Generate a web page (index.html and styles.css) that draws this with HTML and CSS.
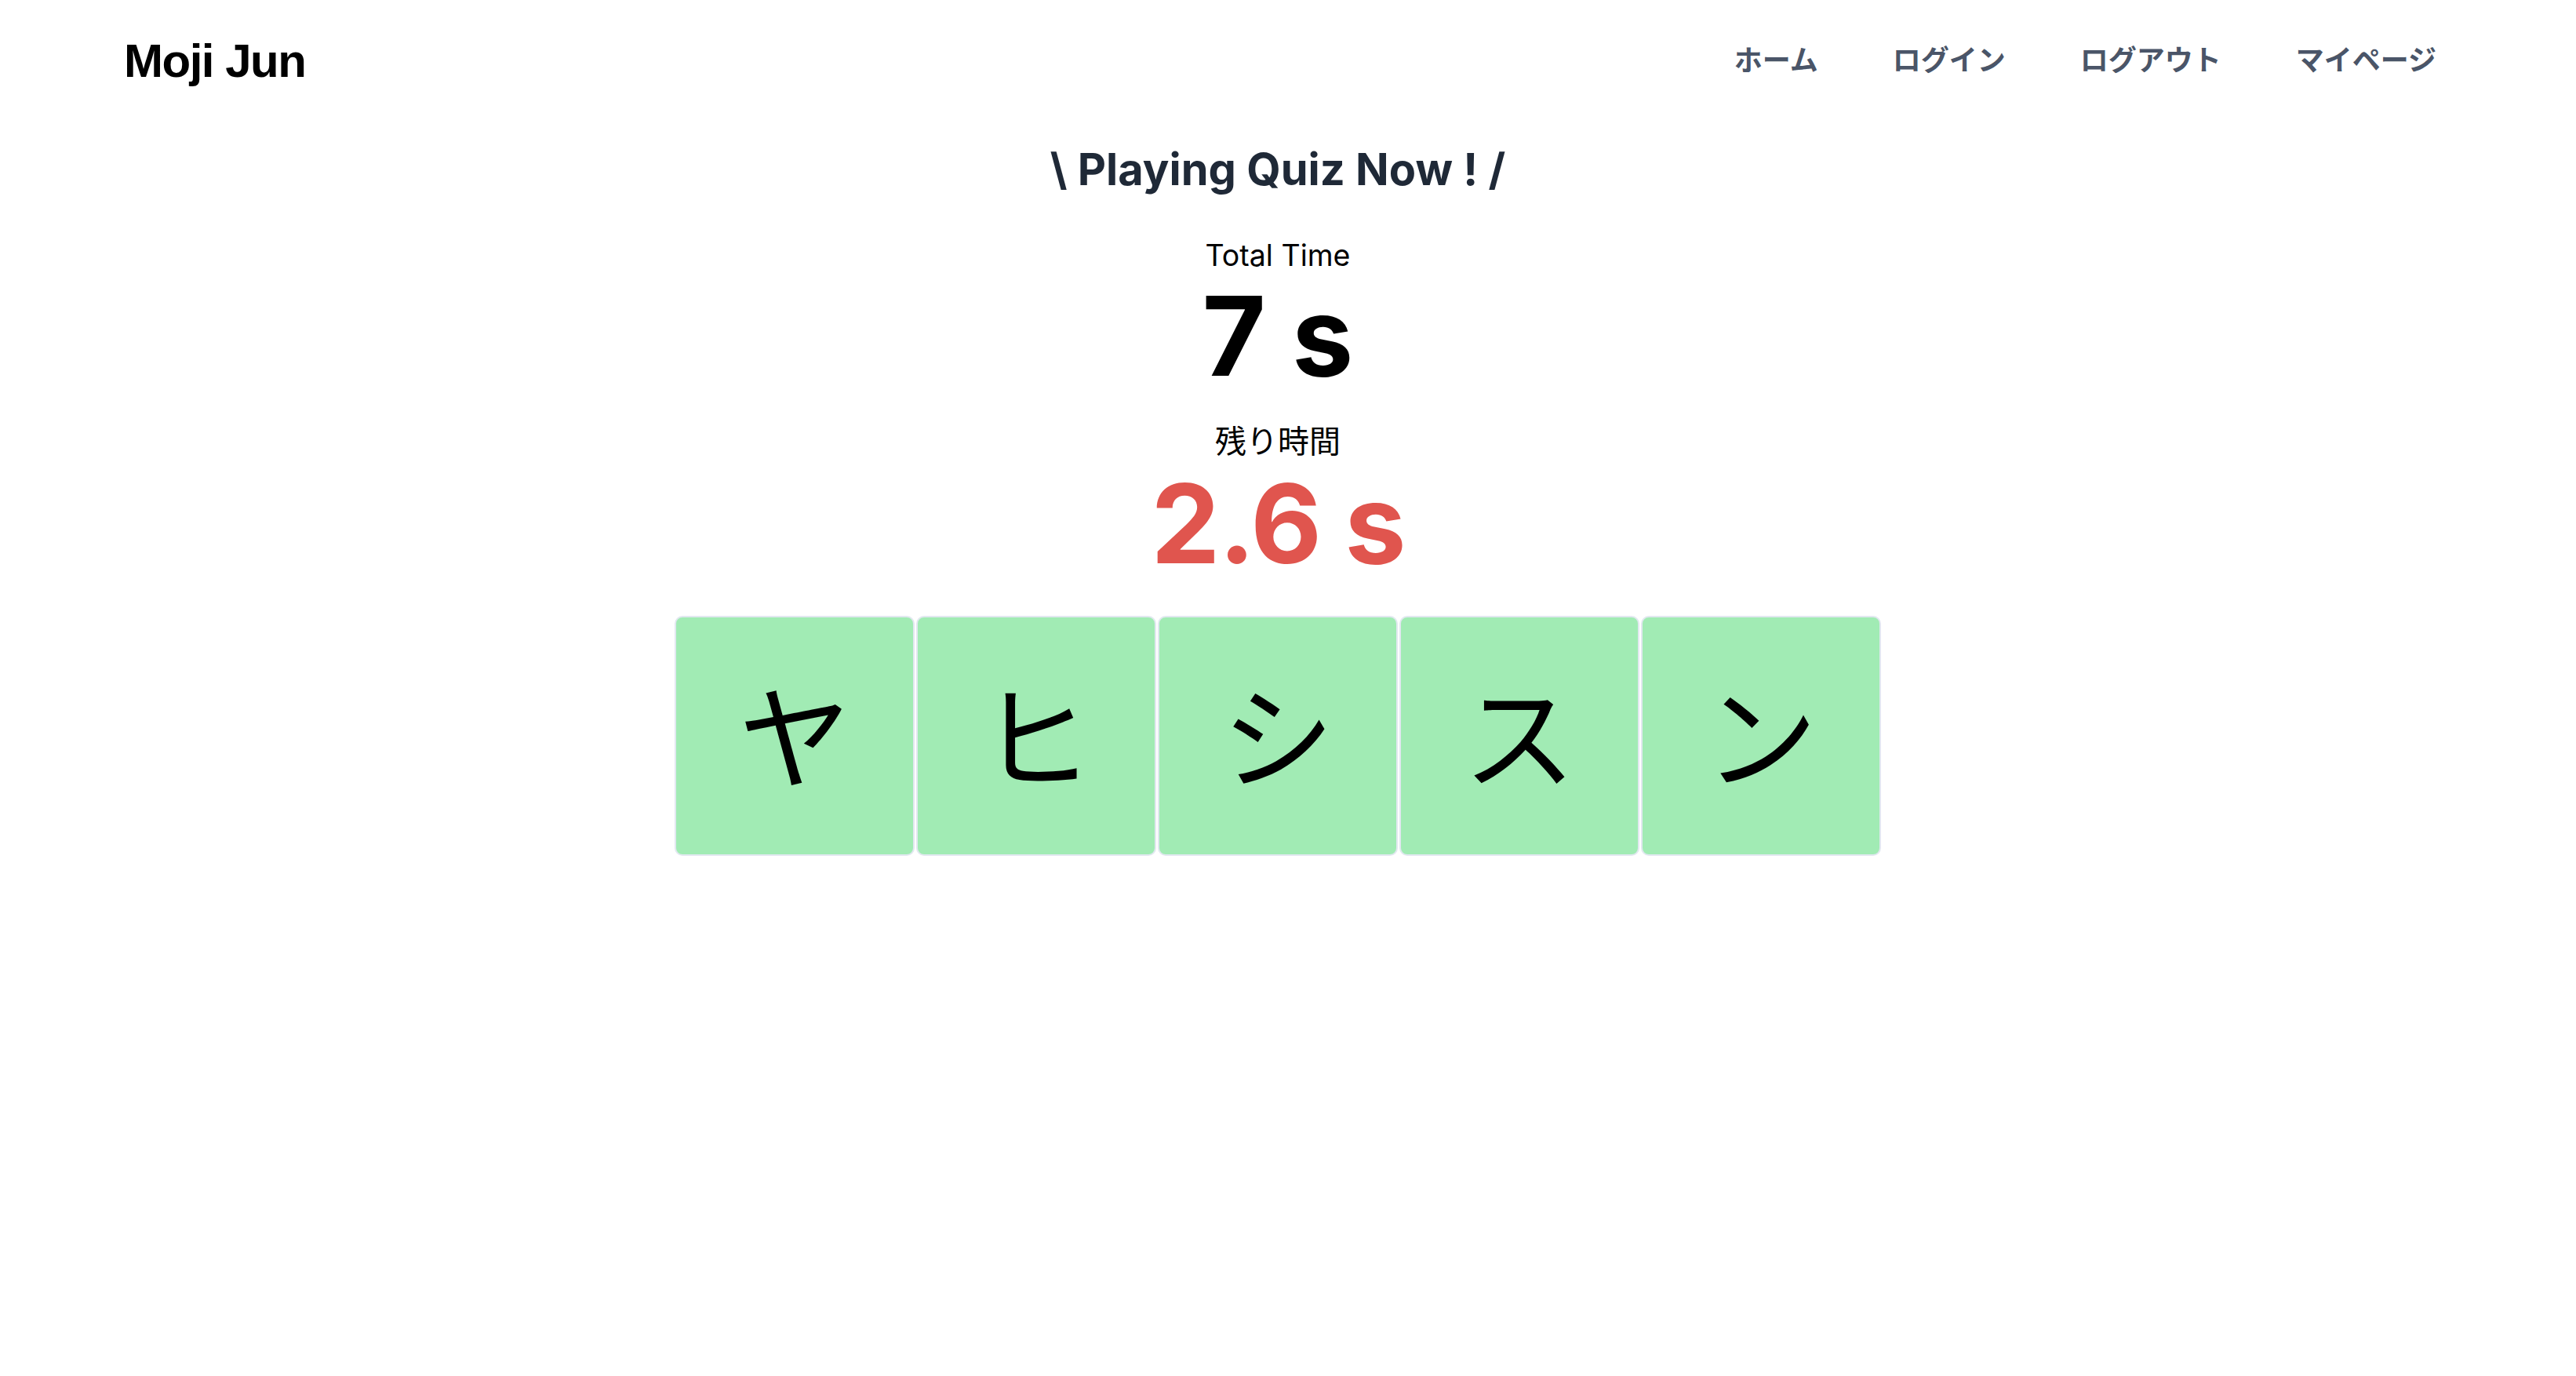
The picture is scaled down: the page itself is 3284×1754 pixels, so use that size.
FILE: index.html
```html
<!DOCTYPE html>
<html lang="ja">
<head>
<meta charset="utf-8">
<title>Moji Jun</title>
<link rel="stylesheet" href="styles.css">
</head>
<body>
<header class="site-header">
  <div class="logo">Moji Jun</div>
  <nav class="nav">
    <a class="nav-link" href="#">ホーム</a>
    <a class="nav-link" href="#">ログイン</a>
    <a class="nav-link" href="#">ログアウト</a>
    <a class="nav-link" href="#">マイページ</a>
  </nav>
</header>
<main class="quiz">
  <h1 class="quiz-title">\ Playing Quiz Now ! /</h1>
  <div class="label label-total">Total Time</div>
  <div class="big-value total-value">7 s</div>
  <div class="label label-remain">残り時間</div>
  <div class="big-value remain-value">2.6 s</div>
  <div class="tiles">
    <div class="tile">ヤ</div>
    <div class="tile">ヒ</div>
    <div class="tile">シ</div>
    <div class="tile">ス</div>
    <div class="tile">ン</div>
  </div>
</main>
</body>
</html>
```
FILE: styles.css
```css
* { box-sizing: border-box; }

body {
  margin: 0;
  background: #ffffff;
  font-family: Inter, "Noto Sans CJK JP", sans-serif;
  color: #000;
}

.site-header {
  height: 156px;
  display: flex;
  align-items: center;
  justify-content: space-between;
  padding: 0 178px 0 158px;
}

.logo {
  font-family: "Liberation Sans", Arial, sans-serif;
  font-weight: 700;
  font-size: 60px;
  line-height: 1;
  letter-spacing: -1.5px;
  color: #000;
}

.nav {
  display: flex;
  gap: 95px;
  padding-bottom: 8px;
}

.nav-link {
  font-family: "Noto Sans CJK JP", sans-serif;
  font-weight: 700;
  font-size: 36px;
  line-height: 1;
  color: #4a5568;
  text-decoration: none;
}

.quiz {
  display: flex;
  flex-direction: column;
  align-items: center;
  padding-right: 26px;
}

.quiz-title {
  margin: 32px 0 0;
  font-size: 56px;
  line-height: 1;
  font-weight: 700;
  color: #1f2937;
}

.label {
  line-height: 1;
  color: #000;
}

.label-total {
  margin-top: 63px;
  font-size: 37.5px;
}

.big-value {
  font-size: 140px;
  line-height: 1;
  font-weight: 700;
}

.total-value {
  margin-top: 13px;
  color: #000;
}

.label-remain {
  margin-top: 45px;
  font-family: Inter, "Noto Sans CJK JP", sans-serif;
  font-size: 40px;
}

.remain-value {
  margin-top: 14px;
  color: #e0554e;
  letter-spacing: -2px;
}

.tiles {
  margin-top: 48px;
  display: flex;
  gap: 2px;
}

.tile {
  width: 306px;
  height: 306px;
  padding-bottom: 12px;
  border: 2px solid #e2e8f0;
  border-radius: 10px;
  background: #a1ebb4;
  display: flex;
  align-items: center;
  justify-content: center;
  font-family: "Noto Sans CJK JP", sans-serif;
  font-size: 144px;
  line-height: 1;
  color: #000;
}
```
